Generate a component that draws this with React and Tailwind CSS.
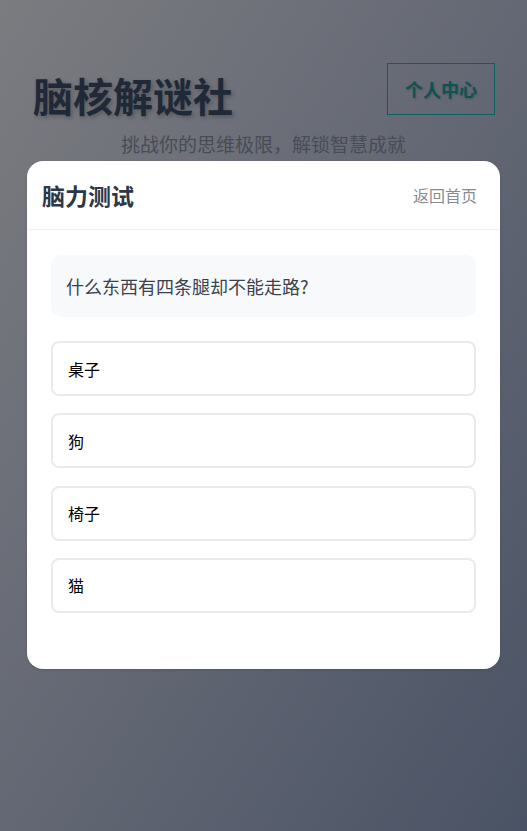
export default function App() {
  const font = { fontFamily: '"Noto Sans CJK SC", "Noto Sans", sans-serif' };
  const options = ["桌子", "狗", "椅子", "猫"];
  return (
    <div
      className="min-h-[831px] w-full bg-gradient-to-br from-[#7b7c80] via-[#646874] to-[#4a5365]"
      style={font}
    >
      <div className="flex items-start justify-between pl-[33px] pr-[32px] pt-[63px]">
        <h1 className="mt-[6px] text-[40px] font-bold leading-[52px] text-[#1f2937] [text-shadow:2px_2px_4px_rgba(0,0,0,0.25)]">
          脑核解谜社
        </h1>
        <button className="h-[52px] w-[108px] border border-[#0f5f5f] text-[18px] font-bold text-[#0d5353] [text-shadow:1px_1px_2px_rgba(0,0,0,0.2)]">
          个人中心
        </button>
      </div>
      <p className="mt-[10px] text-center text-[19px] leading-[26px] text-[#484c54]">
        挑战你的思维极限，解锁智慧成就
      </p>
      <div className="mx-[27px] mt-[4px] rounded-[16px] bg-white shadow-sm">
        <div className="flex h-[69px] items-center justify-between border-b border-[#f0f1f3] pl-[15px] pr-[15px]">
          <h2 className="text-[23px] font-bold text-[#2d3748]">脑力测试</h2>
          <button className="px-2 text-[16px] text-[#888c92]">返回首页</button>
        </div>
        <div className="px-[24px] pb-[56px] pt-[25px]">
          <div className="flex h-[62px] items-center rounded-[10px] bg-[#f8f9fb] px-[15px] text-[18px] text-[#3a4250]">
            什么东西有四条腿却不能走路?
          </div>
          <div className="mt-[24px] flex flex-col gap-[17.3px]">
            {options.map((o) => (
              <div
                key={o}
                className="flex h-[55px] items-center rounded-[8px] border-2 border-[#e8eaed] px-[15px] text-[16px] text-black"
              >
                {o}
              </div>
            ))}
          </div>
        </div>
      </div>
    </div>
  );
}
